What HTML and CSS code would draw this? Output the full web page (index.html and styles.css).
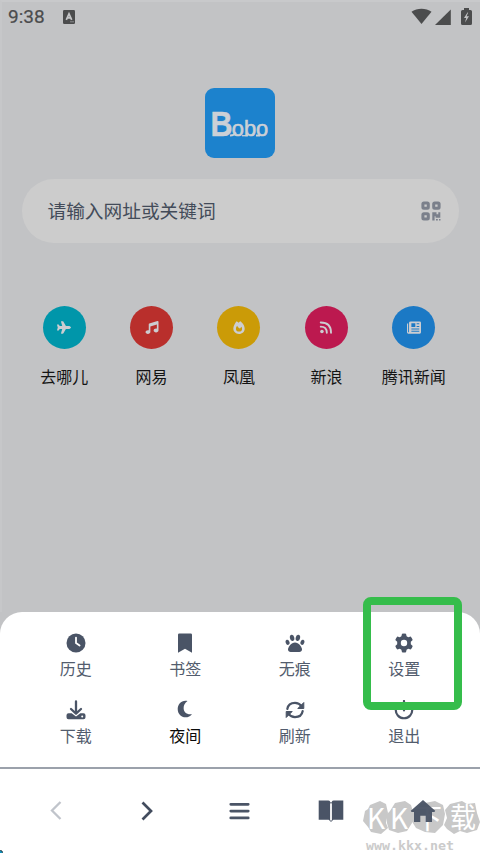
FILE: index.html
```html
<!DOCTYPE html>
<html lang="zh-CN">
<head>
<meta charset="utf-8">
<title>Bobo</title>
<link rel="stylesheet" href="styles.css">
</head>
<body>
<div class="screen">
  <main class="home">
    <header class="status">
      <span class="time">9:38</span>
      <svg class="app-badge" viewBox="0 0 12 14"><rect width="12" height="14" rx="1.2" fill="#4b4c4d"/><path d="M3.300 9.800 6 3.800l2.700 6M4.300 7.800h3.400" fill="none" stroke="#c5c6c8" stroke-width="1.700"/><path d="M7 11.800h4" stroke="#a5a6a8" stroke-width=".7"/></svg>
      <svg class="signals" viewBox="0 0 62 18">
        <path d="M.5 3.800C6 -.3 15 -.3 20.500 3.800L10.500 16z"/>
        <path d="M24 17 39.800 1.500V17z"/>
        <path fill-rule="evenodd" d="M53 0h5v2h1.500q1.500 0 1.500 1.500v12q0 1.500-1.500 1.500h-8q-1.500 0-1.500-1.500v-12Q50 2 51.500 2H53zM56.500 4.500 53 10h2.200L54 14.500 58 8.300h-2.400l1.600-3.800z"/>
      </svg>
    </header>
    <div class="logo">
      <svg viewBox="0 0 70 70"><g fill="#cbd0d6" stroke="#cbd0d6"><text class="logo-big" x="5.500" y="47.500" textLength="22" lengthAdjust="spacingAndGlyphs">B</text><text class="logo-small" x="26.800" y="47.500" textLength="36.500" lengthAdjust="spacingAndGlyphs">obo</text></g><path d="M25 47.500q4.500 0 6-3M51 47.500h4" fill="none" stroke="#cbd0d6" stroke-width="1.800"/><path d="M37 47.700h6" stroke="#cbd0d6" stroke-width="1.300"/></svg>
    </div>
    <div class="search">
      <span>请输入网址或关键词</span>
      <svg class="qr" viewBox="0 0 20 20"><g fill="none" stroke="#7b808b" stroke-width="3"><rect x="1.900" y="1.900" width="5.400" height="5.400" rx="1"/><rect x="12.700" y="1.900" width="5.400" height="5.400" rx="1"/><rect x="1.900" y="12.700" width="5.400" height="5.400" rx="1"/></g><path fill="#7b808b" d="M11.300 11.300h4.200v2h1.800v-2h2v5.400h-4.700v-1.500h-1v4.300h-2.300zM15 18h1.800v1.500H15zM18 18h1.500v1.500H18z"/></svg>
    </div>
    <nav class="sites">
      <a class="site"><span class="disc cyan"><svg viewBox="0 0 576 512"><path d="M482 192c29 0 94 29 94 64s-65 64-94 64H366L265 496c-6 10-16 16-28 16h-56c-11 0-18-10-15-20l49-172H112l-43 58c-3 4-8 6-13 6H14c-10 0-16-9-14-18l32-110L0 146c-2-9 4-18 14-18h42c5 0 10 2 13 6l43 58h103L166 20c-3-10 4-20 15-20h56c12 0 22 6 28 16l101 176z"/></svg></span><span>去哪儿</span></a>
      <a class="site"><span class="disc red"><svg viewBox="0 0 512 512"><path d="M470 2 150 96c-14 4-22 17-22 30v239c-10-3-20-5-32-5-53 0-96 33-96 76s43 76 96 76 96-33 96-76V214l256-76v163c-10-3-20-5-32-5-53 0-96 33-96 76s43 76 96 76 96-33 96-76V32c0-21-21-36-42-30z"/></svg></span><span>网易</span></a>
      <a class="site"><span class="disc amber"><svg viewBox="0 0 448 512"><path fill-rule="evenodd" d="M130 5c35 15 58 35 80 62 15-25 35-45 60-60 30 10 45 25 60 48 70 50 118 170 118 240 0 125-93 217-224 217S0 419 0 299C0 190 70 80 130 5zm20 180c-33 39-48 81-48 127 0 65 53 105 125 105s118-45 118-105c0-33-10-67-28-90l-50 70c-50-10-87-47-117-107z"/></svg></span><span>凤凰</span></a>
      <a class="site"><span class="disc pink"><svg viewBox="0 0 16 16"><circle cx="3" cy="13" r="2.200"/><path d="M1.500 7q7.500 0 7.500 7.500M1.500 1.800q12.700 0 12.700 12.700" fill="none" stroke="#cccdd1" stroke-width="2.300" stroke-linecap="round"/></svg></span><span>新浪</span></a>
      <a class="site"><span class="disc blue"><svg viewBox="0 0 16 14"><path fill-rule="evenodd" d="M4.500 0h10Q16 0 16 1.500v11q0 1.500-1.500 1.500h-13Q0 14 0 12.500v-9Q0 2 1.300 2v10.300h1V1.500Q2.300 0 4.500 0zM5 2v4.500h4.500V2zm6 0v1.300h3V2zm0 3.200v1.300h3V5.200zM5 8v1.300h9V8zm0 2.600v1.300h9v-1.300z"/></svg></span><span>腾讯新闻</span></a>
    </nav>
  </main>

  <section class="sheet">
    <div class="item"><svg viewBox="0 0 20 20"><circle cx="10" cy="10" r="9.500"/><path d="M10 4.600V10l3.600 2.500" fill="none" stroke="#fff" stroke-width="1.800" stroke-linecap="round"/></svg><span>历史</span></div>
    <div class="item"><svg viewBox="0 0 20 20"><path d="M4.300.5h11.400q1.300 0 1.300 1.300v18L10 15.700 3 19.800v-18Q3 .5 4.300.5z"/></svg><span>书签</span></div>
    <div class="item"><svg viewBox="0 0 20 20"><ellipse cx="7.100" cy="4.900" rx="2.200" ry="3.100" transform="rotate(-12 7.100 4.900)"/><ellipse cx="12.900" cy="4.900" rx="2.200" ry="3.100" transform="rotate(12 12.900 4.900)"/><ellipse cx="2.600" cy="9.300" rx="1.900" ry="2.600" transform="rotate(-20 2.600 9.300)"/><ellipse cx="17.400" cy="9.300" rx="1.900" ry="2.600" transform="rotate(20 17.400 9.300)"/><path d="M10 9.500c-3.700 0-7 4.500-7 7.100 0 1.700 1.200 2.400 2.600 2.400h8.800c1.400 0 2.600-.7 2.600-2.400 0-2.600-3.300-7.100-7-7.100z"/></svg><span>无痕</span></div>
    <div class="item"><svg viewBox="0 0 20 20"><path fill-rule="evenodd" d="M8 .8q2-.5 4 0l.6 2.500 1.600.9 2.500-.8q1.400 1.500 2 3.500L16.800 8.700v2.600l1.900 1.800q-.6 2-2 3.500l-2.500-.8-1.600.9-.6 2.500q-2 .5-4 0l-.6-2.500-1.600-.9-2.500.8q-1.400-1.500-2-3.500l1.900-1.800V8.700L1.300 6.900q.6-2 2-3.500l2.500.8 1.600-.9zM10 6.800a3.200 3.200 0 1 0 0 6.400 3.200 3.200 0 0 0 0-6.400z"/></svg><span>设置</span></div>
    <div class="item"><svg viewBox="0 0 20 20"><path d="M10 1.500v11M5 9l5 4.600L15 9" fill="none" stroke="#4a5466" stroke-width="2.300" stroke-linecap="round" stroke-linejoin="round"/><path fill-rule="evenodd" d="M2.500 13.300h3.200L10 16.500l4.300-3.200h3.200q2 0 2 2v2q0 2-2 2h-15q-2 0-2-2v-2q0-2 2-2zm13.700 2.100a1 1 0 1 0 0 2 1 1 0 0 0 0-2z"/></svg><span>下载</span></div>
    <div class="item dark"><svg viewBox="0 0 20 20"><path d="M12.500 1C6.500-.2 2.700 4.200 2.700 9c0 5 3.600 8.300 7.800 8.300 2.700 0 5-1 6.500-3.100C7.800 15.600 6 5.500 12.500 1z"/></svg><span>夜间</span></div>
    <div class="item"><svg viewBox="0 0 20 20"><path d="M2.300 9C3 5 6.200 2.900 10 2.900c3 0 5 1.300 6.800 3.500M17.700 11c-.7 4-3.900 6.100-7.700 6.100-3 0-5-1.300-6.800-3.500" fill="none" stroke="#4a5466" stroke-width="2.200" stroke-linecap="round"/><path d="M18.800 2.500v6h-6zM1.200 17.500v-6h6z" stroke="#4a5466" stroke-linejoin="round"/></svg><span>刷新</span></div>
    <div class="item"><svg viewBox="0 0 20 20"><path d="M5.500 3.200a8.200 8.200 0 1 0 9 0M10 1v9.500" fill="none" stroke="#4a5466" stroke-width="2.200" stroke-linecap="round"/></svg><span>退出</span></div>
    <div class="marker"></div>
  </section>

  <footer class="bar">
    <svg viewBox="0 0 26 26"><path d="M18.500 4 10 12.500l8.500 8.500" fill="none" stroke="#c0c4cb" stroke-width="2.300"/></svg>
    <svg viewBox="0 0 26 26"><path d="m8.500 4.500 8.500 8.500-8.500 8.500" fill="none" stroke="#424c5e" stroke-width="2.700"/></svg>
    <svg viewBox="0 0 26 26"><path d="M4.800 6.300h17.400M4.800 13.100h17.400M4.800 19.900h17.400" stroke="#4a5466" stroke-width="2.800" stroke-linecap="round"/></svg>
    <svg viewBox="0 0 26 26"><path d="M.7 2.500h9.500q1.500 0 1.900 1v19q-.5-.8-1.900-.8H.7zM25.300 2.500h-9.500q-1.500 0-1.900 1v19q.5-.8 1.900-.8h9.500z"/><path d="M11.500 22.400q1.500 1.700 3 0M11.500 4.500q1.500 1 3 0" fill="none" stroke="#4a5466"/></svg>
    <span class="home-tab">
      <svg viewBox="0 0 26 26"><path d="M13 2 25.200 12.800q-.2 1.200-1.400 1.200H22v10h-6.300v-6.300h-5.400V24H4V14H2.200Q1 14 .8 12.800z"/></svg>
      <svg class="watermark" viewBox="0 0 118 58">
        <g fill="#c8c8c8"><path d="m7 6 10-4 6 3 2 9-2 10 2 5-7 6-10-2-3-5-5-6 2-10 3-2z"/><path d="m32 4 10-2 6 4 3 10-2 8-5 8-9 2-9-3-2-7v-9l3-3z"/><path d="m57 5 15-3 8 4 2 9-2 11-8 8-10-1-9-4-5-8 2-10 5-2z"/><path d="m87 5 12-3 5 3 8-1 2 10 3 9-3 8-10 3-7-2-6 3-7-5-3-4 3-7-2-8z"/></g>
        <g class="mark"><text x="4" y="29.500">K</text><text x="27" y="29.500">K</text><text x="51" y="30">下</text><text x="87" y="29" textLength="26" lengthAdjust="spacingAndGlyphs">载</text></g>
        <text class="url" x="3" y="51" textLength="88" lengthAdjust="spacingAndGlyphs">www.kkx.net</text>
      </svg>
    </span>
    <i class="corner"></i>
  </footer>
</div>
</body>
</html>
```

FILE: styles.css
```css
* { box-sizing: border-box; }
body { margin: 0; font-family: Roboto, "Noto Sans CJK SC", sans-serif; }
.screen { width: 480px; height: 853px; display: flex; flex-direction: column; background: #c2c3c5; overflow: hidden; }
svg { display: block; fill: #4a5466; }

.home { height: 612px; flex: none; border-top: 2px solid #c8c9cb; border-left: 2px solid #c6c7c9; padding-right: 2px; display: flex; flex-direction: column; align-items: center; }
.status { width: 100%; height: 30px; padding: 0 5px 0 6px; display: flex; align-items: center; }
.time { font-size: 19px; line-height: 28px; color: #4b4c4d; -webkit-text-stroke: .2px #4b4c4d; width: 55px; }
.app-badge { width: 12px; height: 14px; margin-top: -1px; }
.signals { width: 62px; height: 18px; margin: -1px 0 0 auto; }
.signals path { fill: #4b4c4d; }

.logo { width: 70px; height: 70px; margin-top: 56px; border-radius: 9px; background: #1c82cd; }
.logo-big { font: bold 35.500px "Liberation Sans", sans-serif; stroke-width: .5px; }
.logo-small { font: 22px "Liberation Sans", sans-serif; stroke-width: .6px; }

.search { width: 437px; height: 64px; margin-top: 21px; border-radius: 32px; background: #cccccc; padding: 0 18px 0 26px; display: flex; align-items: center; justify-content: space-between; font-size: 18.700px; color: #434b59; }
.search span { padding-bottom: 3px; }
.qr { width: 20px; height: 20px; }

.sites { width: 437px; margin: 63px 2px 0 0; display: grid; grid-template-columns: repeat(5, 1fr); }
.site { display: flex; flex-direction: column; align-items: center; gap: 17px; font-size: 16px; line-height: 24px; color: #141414; white-space: nowrap; }
.disc { width: 43px; height: 43px; border-radius: 50%; display: flex; align-items: center; justify-content: center; }
.disc svg { width: 14px; height: 13px; fill: #cccdd1; }
.cyan { background: #0096aa; }
.red { background: #b92f2c; }
.amber { background: #cb9b07; }
.pink { background: #bc194f; }
.blue { background: #1b79c5; }

.sheet { position: relative; height: 155px; flex: none; padding: 21px 21px 0; background: #fff; border-radius: 22px 22px 0 0; display: grid; grid-template-columns: repeat(4, 109.500px); grid-template-rows: 67px 67px; }
.item { display: flex; flex-direction: column; align-items: center; font-size: 16px; line-height: 24px; color: #525c6d; gap: 5px; }
.item svg { width: 20px; height: 20px; }
.dark { color: #0b0b0b; }
.marker { position: absolute; left: 363px; top: -15px; width: 99px; height: 113px; border: 8px solid #35bd4b; border-radius: 8px; }

.bar { position: relative; flex: 1; border-top: 2px solid #9ba1ab; background: #fff; padding: 0 11px 1px 9px; display: grid; grid-template-columns: repeat(5, 1fr); align-items: center; justify-items: center; }
.bar > svg, .home-tab > svg:first-child { width: 26px; height: 26px; }
.home-tab { position: relative; }
.home-tab > svg:first-child { position: relative; z-index: 1; opacity: .96; }
.home-tab .watermark { position: absolute; left: -47px; top: 1px; width: 118px; height: 58px; overflow: visible; }
.mark text { font: 28px "Noto Sans CJK SC", sans-serif; fill: #fff; }
.watermark .url { font: bold 12px "DejaVu Sans Mono", monospace; fill: #cbcbcb; }
.corner { position: absolute; left: -2px; bottom: -2px; width: 5px; height: 5px; border-radius: 50%; background: #0e91bb; border: 1px solid #27424c; }
```
